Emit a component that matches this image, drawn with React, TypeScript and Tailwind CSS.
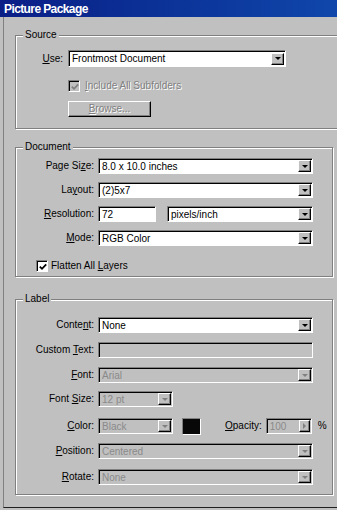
import React from "react";

// Win2000-style bevels
const sunken =
  "border border-t-[#808080] border-l-[#808080] border-b-white border-r-white shadow-[inset_1px_1px_0_#000]";
const raised =
  "border border-t-white border-l-white border-b-black border-r-black shadow-[inset_-1px_-1px_0_#808080]";
const etched =
  "border border-[#808080] shadow-[inset_1px_1px_0_#fff,1px_1px_0_#fff]";
const dim = "text-[#808080] [text-shadow:1px_1px_0_#fff]";

const U = ({ children }: { children: React.ReactNode }) => (
  <span className="underline underline-offset-1">{children}</span>
);

function Combo({
  value,
  disabled = false,
  className = "",
}: {
  value: string;
  disabled?: boolean;
  className?: string;
}) {
  return (
    <div
      className={`flex h-[16px] items-center ${sunken} ${
        disabled ? "bg-[#c0c0c0]" : "bg-white"
      } ${className}`}
    >
      <span
        className={`flex-1 truncate pl-[3px] pt-px leading-none ${
          disabled ? "text-[#8a8a8a]" : "text-black"
        }`}
      >
        {value}
      </span>
      <div
        className={`mr-px flex h-[12px] w-[13px] shrink-0 items-center justify-center bg-[#c0c0c0] ${raised}`}
      >
        <div
          className={`h-0 w-0 border-x-[3px] border-t-[3px] border-x-transparent ${
            disabled ? "border-t-[#808080]" : "border-t-black"
          }`}
        />
      </div>
    </div>
  );
}

function Field({
  value,
  disabled = false,
  className = "",
}: {
  value: string;
  disabled?: boolean;
  className?: string;
}) {
  return (
    <div
      className={`flex h-[16px] items-center ${sunken} ${
        disabled ? "bg-[#c0c0c0]" : "bg-white"
      } ${className}`}
    >
      <span className="pl-[3px] pt-px leading-none text-black">{value}</span>
    </div>
  );
}

function Check({ checked, disabled = false }: { checked: boolean; disabled?: boolean }) {
  return (
    <div
      className={`flex h-[12px] w-[12px] shrink-0 items-center justify-center ${sunken} ${
        disabled ? "bg-[#c0c0c0]" : "bg-white"
      }`}
    >
      {checked && (
        <svg width="8" height="8" viewBox="0 0 8 8" className="ml-px mt-px">
          <path
            d="M0.8 3.6L3 5.8L7.2 1.4"
            fill="none"
            stroke={disabled ? "#808080" : "#000"}
            strokeWidth="1.8"
          />
        </svg>
      )}
    </div>
  );
}

function Row({
  label,
  children,
  className = "",
}: {
  label: React.ReactNode;
  children: React.ReactNode;
  className?: string;
}) {
  return (
    <div className={`flex h-[16px] items-center ${className}`}>
      <div className="w-[78px] text-right leading-none">{label}</div>
      <div className="ml-[4px] flex items-center">{children}</div>
    </div>
  );
}

function Legend({ children }: { children: React.ReactNode }) {
  return (
    <div className="-mt-[8px] ml-[7px] w-fit bg-[#c0c0c0] px-[2px] leading-[14px]">
      {children}
    </div>
  );
}

export default function App() {
  return (
    <div className="h-[510px] w-[337px] overflow-hidden bg-[#c0c0c0] font-['Liberation_Sans',Arial,sans-serif] text-[10px] text-black">
      {/* title bar */}
      <div className="flex h-[17px] items-center bg-gradient-to-r from-[#0a1e86] to-[#1046aa] pl-[4px]">
        <span className="text-[12px] font-bold tracking-[-0.6px] text-white">
          Picture Package
        </span>
      </div>

      <div className="ml-[3px] flex h-[491px] flex-col border-b border-l border-b-[#202020] border-l-[#808080] pl-[11px]">
        {/* Source */}
        <div className={`mt-[18px] h-[94px] w-[340px] shrink-0 ${etched}`}>
          <Legend>Source</Legend>
          <div className="mt-[8px] flex h-[17px] items-center">
            <div className="w-[47px] text-right">
              <U>U</U>se:
            </div>
            <Combo value="Frontmost Document" className="ml-[5px] h-[17px] w-[218px]" />
          </div>
          <div className="mt-[13px] flex items-center pl-[52px]">
            <Check checked disabled />
            <span className={`ml-[5px] leading-none ${dim}`}>
              <U>I</U>nclude All Subfolders
            </span>
          </div>
          <div
            className={`ml-[52px] mt-[9px] flex h-[16px] w-[83px] items-center justify-center bg-[#c0c0c0] ${raised}`}
          >
            <span className={`leading-none ${dim}`}>
              <U>B</U>rowse...
            </span>
          </div>
        </div>

        {/* Document */}
        <div className={`mt-[18px] h-[130px] w-[318px] shrink-0 ${etched}`}>
          <Legend>Document</Legend>
          <div className="mt-[4px] flex flex-col gap-[8px]">
            <Row label={<>Page Si<U>z</U>e:</>}>
              <Combo value="8.0 x 10.0 inches" className="w-[215px]" />
            </Row>
            <Row label={<>La<U>y</U>out:</>}>
              <Combo value="(2)5x7" className="w-[215px]" />
            </Row>
            <Row label={<><U>R</U>esolution:</>}>
              <Field value="72" className="w-[58px]" />
              <Combo value="pixels/inch" className="ml-[11px] w-[146px]" />
            </Row>
            <Row label={<><U>M</U>ode:</>}>
              <Combo value="RGB Color" className="w-[215px]" />
            </Row>
          </div>
          <div className="mt-[14px] flex items-center pl-[20px]">
            <Check checked />
            <span className="ml-[3px] leading-none">
              Flatten All <U>L</U>ayers
            </span>
          </div>
        </div>

        {/* Label */}
        <div className={`mt-[22px] h-[196px] w-[318px] shrink-0 ${etched}`}>
          <Legend>Label</Legend>
          <Row className="mt-[11px]" label={<>Conte<U>n</U>t:</>}>
            <Combo value="None" className="w-[215px]" />
          </Row>
          <Row className="mt-[9px]" label={<>Custom <U>T</U>ext:</>}>
            <Field value="" disabled className="w-[215px]" />
          </Row>
          <Row className="mt-[9px]" label={<><U>F</U>ont:</>}>
            <Combo value="Arial" disabled className="w-[215px]" />
          </Row>
          <Row className="mt-[8px]" label={<>Font <U>S</U>ize:</>}>
            <Combo value="12 pt" disabled className="w-[75px]" />
          </Row>
          <Row className="mt-[11px]" label={<><U>C</U>olor:</>}>
            <Combo value="Black" disabled className="w-[75px]" />
            <div className="ml-[9px] h-[17px] w-[19px] border border-t-[#808080] border-l-[#808080] border-b-white border-r-white bg-[#080808]" />
            <span className="ml-[24px] leading-none">
              <U>O</U>pacity:
            </span>
            <div className={`ml-[4px] flex h-[16px] w-[46px] items-center bg-[#c0c0c0] ${sunken}`}>
              <span className="flex-1 pl-[3px] pt-px leading-none text-[#8a8a8a]">100</span>
              <div
                className={`mr-px flex h-[12px] w-[11px] items-center justify-center bg-[#c0c0c0] ${raised}`}
              >
                <div className="h-0 w-0 border-y-[3px] border-l-[3px] border-y-transparent border-l-[#808080]" />
              </div>
            </div>
            <span className="ml-[6px] leading-none">%</span>
          </Row>
          <Row className="mt-[9px]" label={<><U>P</U>osition:</>}>
            <Combo value="Centered" disabled className="w-[215px]" />
          </Row>
          <Row className="mt-[10px]" label={<><U>R</U>otate:</>}>
            <Combo value="None" disabled className="w-[215px]" />
          </Row>
        </div>
      </div>
    </div>
  );
}
